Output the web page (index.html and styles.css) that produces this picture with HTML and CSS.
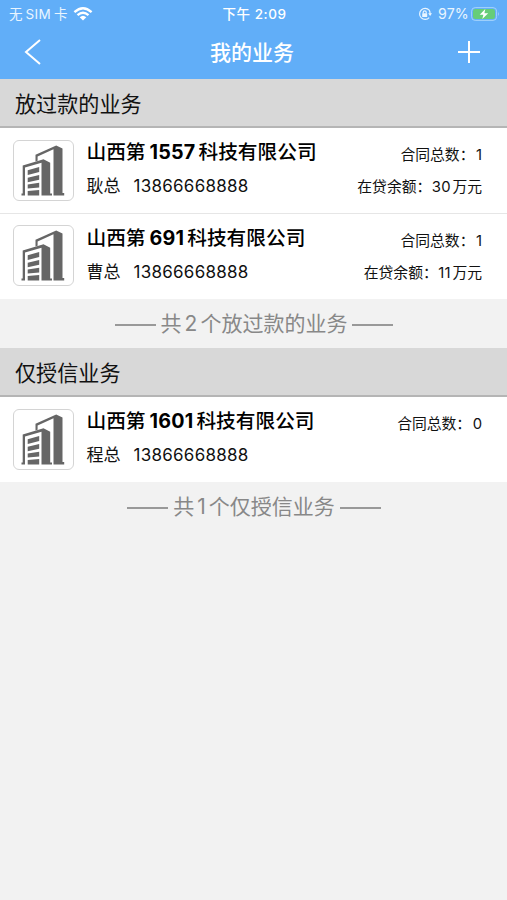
FILE: index.html
```html
<!DOCTYPE html>
<html lang="zh-CN">
<head>
<meta charset="utf-8">
<meta name="viewport" content="width=device-width, initial-scale=1">
<title>我的业务</title>
<link rel="stylesheet" href="styles.css">
</head>
<body>
<svg class="defs" width="0" height="0" aria-hidden="true">
  <symbol id="building" viewBox="0 0 59 59">
    <path d="M21.500 20.500V13.800L42.200 4.600L48.500 7.500V52H50.200V54.500H39.500V8.200L23.600 15.500V19.800Z" />
    <path d="M7.500 54.500V52.500H8.700V24.600L29.500 18.300L36.200 21.800V52.500H38V54.500H27.500V21.700L11 26.600V54.500Z" />
    <path d="M13.700 29.200L25.200 26V31L13.700 34ZM13.700 36.700L25.200 34V38.700L13.700 41.200ZM13.700 43.500L25.200 41.700V46.500L13.700 47.500ZM13.700 50L25.200 49V54.500H13.700Z" />
  </symbol>
</svg>
<header class="header">
  <div class="status">
    <div class="carrier"><span>无</span><span class="sim">SIM</span><span>卡</span>
      <svg class="wifi" viewBox="0 0 20 14"><path d="M1.400 5.200Q10-2.600 18.600 5.200" /><path d="M4.500 8.200Q10 3.200 15.500 8.200" /><path class="solid" d="M6.700 10.200Q10 7.200 13.300 10.200L10 13.500Z" /></svg>
    </div>
    <div class="time">下午 2:09</div>
    <div class="power">
      <svg class="lock" viewBox="0 0 14 14"><path d="M11.200 3.200A5.500 5.500 0 1 0 11.200 10.600" /><path d="M11.200 3.200Q12.100 4.500 12.100 7" /><path class="solid" d="M10.200 6.300H14L12.100 8.900Z" /><rect class="solid" x="4.200" y="6.200" width="5" height="3.800" rx=".6" /><path d="M5.200 6.500V5.300A1.500 1.500 0 0 1 8.200 5.300V6.500" /></svg>
      <span class="percent">97%</span>
      <svg class="battery" viewBox="0 0 29 14"><rect class="case" x=".6" y=".6" width="25" height="12.800" rx="3.600" /><rect class="charge" x="2" y="2" width="22" height="10" rx="2.300" /><path class="cap" d="M27 4.800Q28.800 7 27 9.200Z" /><path class="bolt" d="M14.300 2L8.700 7.700H12.400L11.300 12L17.200 6.200H13.400Z" /></svg>
    </div>
  </div>
  <nav class="nav">
    <svg class="back" viewBox="0 0 18 28"><path d="M16 2L2 14L16 26" /></svg>
    <h1 class="title">我的业务</h1>
    <svg class="add" viewBox="0 0 22 22"><path d="M11 0V22M0 11H22" /></svg>
  </nav>
</header>
<main>
  <h2 class="section">放过款的业务</h2>
  <article class="row">
    <div class="avatar"><svg><use href="#building" /></svg></div>
    <div class="info">
      <div class="company">山西第<b>1557</b>科技有限公司</div>
      <div class="contact"><span>耿总</span><span class="phone">13866668888</span></div>
    </div>
    <div class="facts"><div>合同总数：<i>1</i></div><div>在贷余额：<i>30</i><span class="unit">万元</span></div></div>
  </article>
  <article class="row">
    <div class="avatar"><svg><use href="#building" /></svg></div>
    <div class="info">
      <div class="company">山西第<b>691</b>科技有限公司</div>
      <div class="contact"><span>曹总</span><span class="phone">13866668888</span></div>
    </div>
    <div class="facts"><div>合同总数：<i>1</i></div><div>在贷余额：<i>11</i><span class="unit">万元</span></div></div>
  </article>
  <p class="note"><span>共<i>2</i>个放过款的业务</span></p>
  <h2 class="section">仅授信业务</h2>
  <article class="row">
    <div class="avatar"><svg><use href="#building" /></svg></div>
    <div class="info">
      <div class="company">山西第<b>1601</b>科技有限公司</div>
      <div class="contact"><span>程总</span><span class="phone">13866668888</span></div>
    </div>
    <div class="facts"><div>合同总数：<i>0</i></div></div>
  </article>
  <p class="note"><span>共<i>1</i>个仅授信业务</span></p>
</main>
</body>
</html>
```
FILE: styles.css
```css
* { box-sizing: border-box; }
body {
  margin: 0;
  min-height: 900px;
  background: #f2f2f2;
  color: #111;
  font-family: Inter, "Noto Sans CJK SC", sans-serif;
}
h1, h2, p { margin: 0; font-weight: 400; }
i { font-style: normal; }
.defs { display: block; height: 0; }
svg { display: block; flex: none; }

.header { height: 79px; background: #61aef8; color: #fff; }
.status {
  display: grid;
  grid-template-columns: 1fr auto 1fr;
  align-items: center;
  height: 27px;
  padding: 0 7px 0 9px;
  font-size: 13.5px;
  line-height: 28px;
}
.carrier, .power { display: flex; align-items: center; color: #e9f5ff; }
.sim { margin: 0 3px; letter-spacing: .3px; }
.wifi { width: 20px; height: 14px; margin-left: 6px; fill: none; stroke: #fff; stroke-width: 2.300; }
.solid { fill: #fff; stroke: none; }
.lock .solid { fill: #e9f5ff; }
.time { font-weight: 500; letter-spacing: .55px; }
.power { justify-content: flex-end; }
.lock { width: 14px; height: 14px; margin-right: 6px; fill: none; stroke: #e9f5ff; stroke-width: 1.200; }
.percent { margin-right: 2px; font-size: 14.2px; letter-spacing: .2px; }
.battery { width: 29px; height: 14px; }
.case { fill: none; stroke: #a6d3fb; }
.charge { fill: #66cd78; }
.cap { fill: #a6d3fb; }
.bolt { fill: #fff; }
.nav {
  display: grid;
  grid-template-columns: 1fr auto 1fr;
  align-items: center;
  height: 50px;
  padding: 0 27px 0 24px;
}
.back { width: 18px; height: 28px; fill: none; stroke: #fff; stroke-width: 2; }
.title { padding-top: 1px; font-size: 21px; font-weight: 500; line-height: 49px; }
.add { justify-self: end; width: 22px; height: 22px; fill: none; stroke: #fff; stroke-width: 2; }

.section {
  height: 49px;
  padding-left: 15px;
  border-bottom: 2px solid #b5b5b5;
  background: #d8d8d8;
  font-size: 21.1px;
  line-height: 52px;
}
.row {
  display: flex;
  height: 85px;
  padding: 12px 25px 0 13px;
  background: #fff;
}
.row + .row { height: 86px; border-top: 1px solid #e6e6e6; }
.avatar {
  width: 61px;
  height: 61px;
  border: 1px solid #d4d4d4;
  border-radius: 6px;
}
.row + .row .avatar { margin-top: -1px; }
.avatar svg { width: 59px; height: 59px; fill: #666; }
.info { margin-left: 12.5px; white-space: nowrap; }
.company { height: 24px; color: #000; font-size: 19.7px; font-weight: 500; line-height: 25px; }
.company b { margin: 0 3px 0 4px; font-weight: 700; letter-spacing: .2px; }
.contact { display: flex; height: 24px; margin-top: 10px; font-size: 17px; line-height: 25px; }
.phone { margin-left: 13px; letter-spacing: .27px; }
.facts {
  margin-left: auto;
  padding-top: 3px;
  font-size: 14.8px;
  line-height: 25px;
  text-align: right;
  white-space: nowrap;
}
.facts i { margin-left: 1.5px; }
.facts div + div { margin-top: 7px; }
.facts div + div i { margin-left: .5px; letter-spacing: .3px; }
.unit { margin-left: 1.5px; }
.note {
  display: flex;
  justify-content: center;
  align-items: center;
  gap: 5px;
  height: 49px;
  padding-left: 1px;
  color: #888;
  font-size: 21px;
  line-height: 52px;
}
.note::before, .note::after { content: ""; width: 41px; height: 2px; margin-top: 2px; background: #999; }
.note i { margin: 0 3px; }
```
